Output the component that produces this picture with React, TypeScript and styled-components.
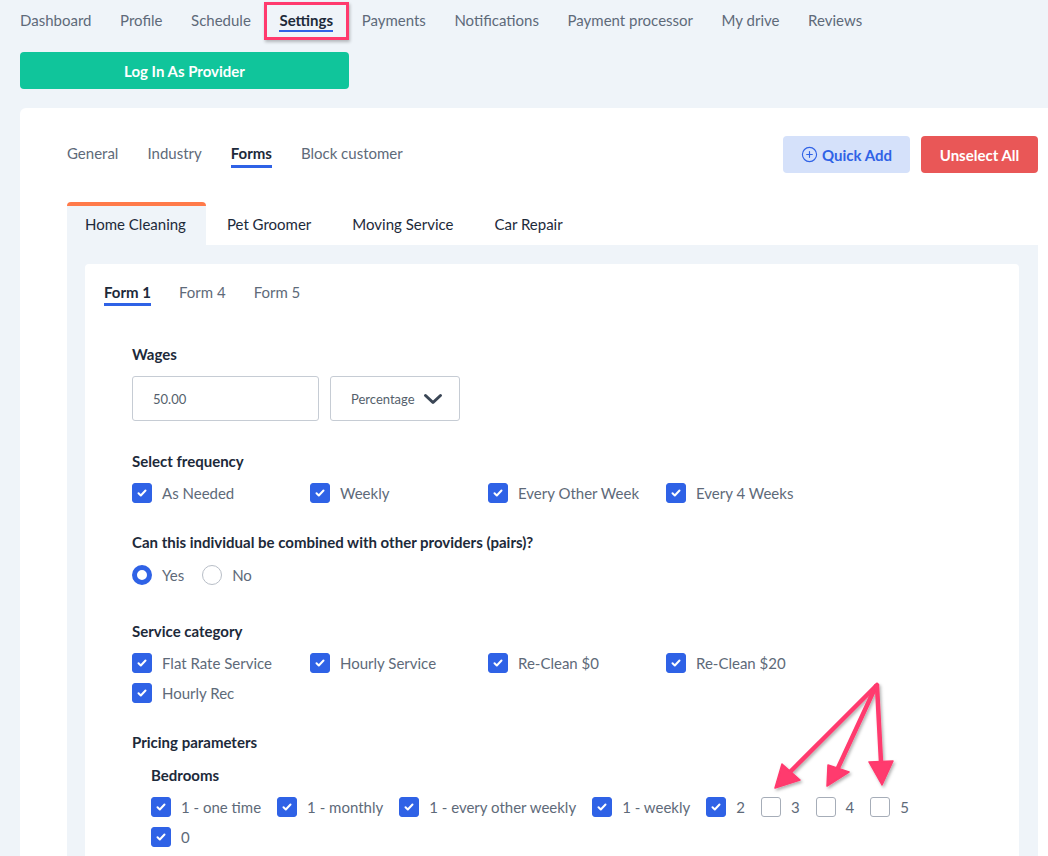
import styled, { createGlobalStyle, css } from "styled-components";
import { CirclePlus } from "lucide-react";

const BLUE = "#2f62e6";
const TEXT_DARK = "#1d2a3a";
const TEXT_GRAY = "#5e6a79";
const PANEL_BG = "#eff4f9";
const PINK = "#ff3a6e";

const GlobalStyle = createGlobalStyle`
  body {
    margin: 0;
    background: ${PANEL_BG};
    font-family: Lato, "Noto Sans", sans-serif;
    overflow: hidden;
  }
  * { box-sizing: border-box; }
`;

const Page = styled.div`
  position: relative;
  width: 1048px;
  height: 856px;
  overflow: hidden;
  padding-left: 20px;
`;

const Nav = styled.nav`
  display: flex;
  gap: 28.6px;
  padding-top: 10px;
  height: 42px;
`;

const NavItem = styled.a<{ $active?: boolean }>`
  position: relative;
  height: 22px;
  font-size: 15px;
  line-height: 20px;
  color: ${(p) => (p.$active ? TEXT_DARK : TEXT_GRAY)};
  font-weight: ${(p) => (p.$active ? 700 : 400)};
  border-bottom: 2px solid ${(p) => (p.$active ? BLUE : "transparent")};
  white-space: nowrap;
  ${(p) =>
    p.$active &&
    css`
      &::after {
        content: "";
        position: absolute;
        left: -15px;
        right: -16px;
        top: -8px;
        bottom: -10px;
        border: 3.5px solid ${PINK};
        box-shadow: 1px 2px 3px rgba(0, 0, 0, 0.25);
      }
    `}
`;

const ProviderButton = styled.button`
  display: block;
  margin-top: 10px;
  width: 329px;
  height: 37px;
  border: none;
  border-radius: 4px;
  background: #10c59b;
  color: #fff;
  font-family: inherit;
  font-size: 15px;
  font-weight: 700;
`;

const Card = styled.div`
  margin-top: 19px;
  width: 1065px;
  height: 760px;
  background: #fff;
  border-radius: 6px;
  padding: 28px 47px 0;
`;

const TopRow = styled.div`
  display: flex;
  align-items: center;
  justify-content: space-between;
  height: 37px;
`;

const SubTabs = styled.div`
  display: flex;
  gap: 29px;
  align-items: flex-start;
  height: 25px;
  margin-top: 2px;
`;

const SubTab = styled.span<{ $active?: boolean }>`
  font-size: 15px;
  line-height: 20px;
  padding-bottom: 2px;
  color: ${(p) => (p.$active ? TEXT_DARK : TEXT_GRAY)};
  font-weight: ${(p) => (p.$active ? 700 : 400)};
  border-bottom: 3px solid ${(p) => (p.$active ? BLUE : "transparent")};
`;

const Actions = styled.div`
  display: flex;
  gap: 11px;
`;

const ActionButton = styled.button<{ $variant: "soft" | "danger" }>`
  display: flex;
  align-items: center;
  justify-content: center;
  gap: 4px;
  height: 37px;
  border: none;
  border-radius: 4px;
  font-family: inherit;
  font-size: 15px;
  font-weight: 700;
  width: ${(p) => (p.$variant === "soft" ? "127px" : "117px")};
  background: ${(p) => (p.$variant === "soft" ? "#d5e1fa" : "#e95757")};
  color: ${(p) => (p.$variant === "soft" ? BLUE : "#fff")};
`;

const IndustryTabs = styled.div`
  display: flex;
  gap: 3px;
  margin-top: 29px;
`;

const IndustryTab = styled.div<{ $active?: boolean }>`
  display: flex;
  align-items: center;
  height: 43px;
  padding: 0 20px 3px 18px;
  font-size: 15px;
  color: ${TEXT_DARK};
  border-top: 4px solid ${(p) => (p.$active ? "#ff7a4a" : "transparent")};
  border-radius: 4px 4px 0 0;
  background: ${(p) => (p.$active ? PANEL_BG : "transparent")};
`;

const Panel = styled.div`
  background: ${PANEL_BG};
  padding: 19px 19px 0 18px;
  height: 620px;
`;

const FormCard = styled.div`
  background: #fff;
  border-radius: 4px;
  padding: 18px 19px 0;
  height: 100%;
`;

const FormTabs = styled.div`
  display: flex;
  gap: 28px;
`;

const FormTab = styled.span<{ $active?: boolean }>`
  font-size: 15px;
  line-height: 20px;
  padding-bottom: 1px;
  color: ${(p) => (p.$active ? TEXT_DARK : TEXT_GRAY)};
  font-weight: ${(p) => (p.$active ? 700 : 400)};
  border-bottom: 3px solid ${(p) => (p.$active ? BLUE : "transparent")};
`;

const FormBody = styled.div`
  padding-left: 28px;
  padding-top: 14px;
`;

const Section = styled.section<{ $indent?: boolean; $gap?: number }>`
  margin-top: ${(p) => p.$gap ?? 29}px;
  padding-left: ${(p) => (p.$indent ? 19 : 0)}px;
`;

const Heading = styled.h4<{ $space?: number }>`
  margin: 0 0 ${(p) => p.$space ?? 12}px;
  font-size: 15px;
  line-height: 20px;
  font-weight: 700;
  color: ${TEXT_DARK};
`;

const InputRow = styled.div`
  display: flex;
  gap: 11px;
`;

const Field = styled.div<{ $width: number }>`
  display: flex;
  align-items: center;
  gap: 8px;
  width: ${(p) => p.$width}px;
  height: 45px;
  padding-left: 20px;
  border: 1px solid #c6ccd4;
  border-radius: 3px;
  font-size: 13px;
  color: #555f6c;
`;

const CheckGrid = styled.div`
  display: grid;
  grid-template-columns: repeat(4, 178px);
  row-gap: 10px;
`;

const WrapRow = styled.div`
  display: flex;
  flex-wrap: wrap;
  column-gap: 16px;
  row-gap: 10px;
  max-width: 790px;
`;

const RadioRow = styled.div`
  display: flex;
  gap: 18px;
`;

const Option = styled.label`
  display: flex;
  align-items: center;
  gap: 10px;
  height: 20px;
  font-size: 15px;
  color: ${TEXT_GRAY};
  white-space: nowrap;
`;

const Box = styled.span<{ $checked?: boolean }>`
  display: flex;
  align-items: center;
  justify-content: center;
  width: 20px;
  height: 20px;
  border-radius: 3px;
  background: ${(p) => (p.$checked ? BLUE : "#fff")};
  border: 1px solid ${(p) => (p.$checked ? BLUE : "#a6adb8")};
`;

const Radio = styled.span<{ $checked?: boolean }>`
  width: 20px;
  height: 20px;
  border-radius: 50%;
  background: #fff;
  border: ${(p) => (p.$checked ? `5px solid ${BLUE}` : "1px solid #b8bec7")};
`;

const Annotation = styled.svg`
  position: absolute;
  left: 0;
  top: 0;
  pointer-events: none;
`;

const Check = ({ label, checked = true }: { label: string; checked?: boolean }) => (
  <Option>
    <Box $checked={checked}>
      {checked && (
        <svg width="12" height="12" viewBox="0 0 12 12">
          <path d="M2.5 6.3l2.3 2.2 4.7-5" fill="none" stroke="#fff" strokeWidth="2" strokeLinecap="round" strokeLinejoin="round" />
        </svg>
      )}
    </Box>
    {label}
  </Option>
);

const navItems = ["Dashboard", "Profile", "Schedule", "Settings", "Payments", "Notifications", "Payment processor", "My drive", "Reviews"];
const frequencies = ["As Needed", "Weekly", "Every Other Week", "Every 4 Weeks"];
const categories = ["Flat Rate Service", "Hourly Service", "Re-Clean $0", "Re-Clean $20", "Hourly Rec"];
const bedrooms: [string, boolean][] = [
  ["1 - one time", true],
  ["1 - monthly", true],
  ["1 - every other weekly", true],
  ["1 - weekly", true],
  ["2", true],
  ["3", false],
  ["4", false],
  ["5", false],
  ["0", true],
];

export default function App() {
  return (
    <Page>
      <GlobalStyle />
      <Nav>
        {navItems.map((n) => (
          <NavItem key={n} $active={n === "Settings"}>
            {n}
          </NavItem>
        ))}
      </Nav>
      <ProviderButton>Log In As Provider</ProviderButton>
      <Card>
        <TopRow>
          <SubTabs>
            <SubTab>General</SubTab>
            <SubTab>Industry</SubTab>
            <SubTab $active>Forms</SubTab>
            <SubTab>Block customer</SubTab>
          </SubTabs>
          <Actions>
            <ActionButton $variant="soft">
              <CirclePlus size={17} strokeWidth={1.6} />
              Quick Add
            </ActionButton>
            <ActionButton $variant="danger">Unselect All</ActionButton>
          </Actions>
        </TopRow>
        <IndustryTabs>
          <IndustryTab $active>Home Cleaning</IndustryTab>
          <IndustryTab>Pet Groomer</IndustryTab>
          <IndustryTab>Moving Service</IndustryTab>
          <IndustryTab>Car Repair</IndustryTab>
        </IndustryTabs>
        <Panel>
          <FormCard>
            <FormTabs>
              <FormTab $active>Form 1</FormTab>
              <FormTab>Form 4</FormTab>
              <FormTab>Form 5</FormTab>
            </FormTabs>
            <FormBody>
              <Section $gap={24}>
                <Heading>Wages</Heading>
                <InputRow>
                  <Field $width={187}>50.00</Field>
                  <Field $width={130}>
                    Percentage
                    <svg width="20" height="14" viewBox="0 0 20 14">
                      <path d="M2.5 3.5l7.5 7 7.5-7" fill="none" stroke="#3a4655" strokeWidth="3" strokeLinecap="round" strokeLinejoin="round" />
                    </svg>
                  </Field>
                </InputRow>
              </Section>
              <Section $gap={30}>
                <Heading>Select frequency</Heading>
                <CheckGrid>
                  {frequencies.map((f) => (
                    <Check key={f} label={f} />
                  ))}
                </CheckGrid>
              </Section>
              <Section>
                <Heading $space={13}>Can this individual be combined with other providers (pairs)?</Heading>
                <RadioRow>
                  <Option>
                    <Radio $checked />
                    Yes
                  </Option>
                  <Option>
                    <Radio />
                    No
                  </Option>
                </RadioRow>
              </Section>
              <Section $gap={36}>
                <Heading>Service category</Heading>
                <CheckGrid>
                  {categories.map((c) => (
                    <Check key={c} label={c} />
                  ))}
                </CheckGrid>
              </Section>
              <Section>
                <Heading $space={13}>Pricing parameters</Heading>
              </Section>
              <Section $indent $gap={0}>
                <Heading>Bedrooms</Heading>
                <WrapRow>
                  {bedrooms.map(([b, c]) => (
                    <Check key={b} label={b} checked={c} />
                  ))}
                </WrapRow>
              </Section>
            </FormBody>
          </FormCard>
        </Panel>
      </Card>
      <Annotation width="1048" height="856" viewBox="0 0 1048 856">
        <defs>
          <filter id="sh" x="-20%" y="-20%" width="140%" height="140%">
            <feDropShadow dx="1.5" dy="2" stdDeviation="1.5" floodColor="#000" floodOpacity="0.3" />
          </filter>
        </defs>
        <g filter="url(#sh)" fill={PINK} stroke={PINK} strokeLinecap="round" strokeLinejoin="round">
          <path d="M877 685 L790 772" strokeWidth="4.5" fill="none" />
          <path d="M876 686 L838 768" strokeWidth="4.5" fill="none" />
          <path d="M877 686 L881 762" strokeWidth="4.5" fill="none" />
          <path d="M775 788 L782 764 L800 780 Z" strokeWidth="1.5" />
          <path d="M827 786 L828 765 L849 772 Z" strokeWidth="1.5" />
          <path d="M882 785 L869 762 L893 761 Z" strokeWidth="1.5" />
        </g>
      </Annotation>
    </Page>
  );
}
